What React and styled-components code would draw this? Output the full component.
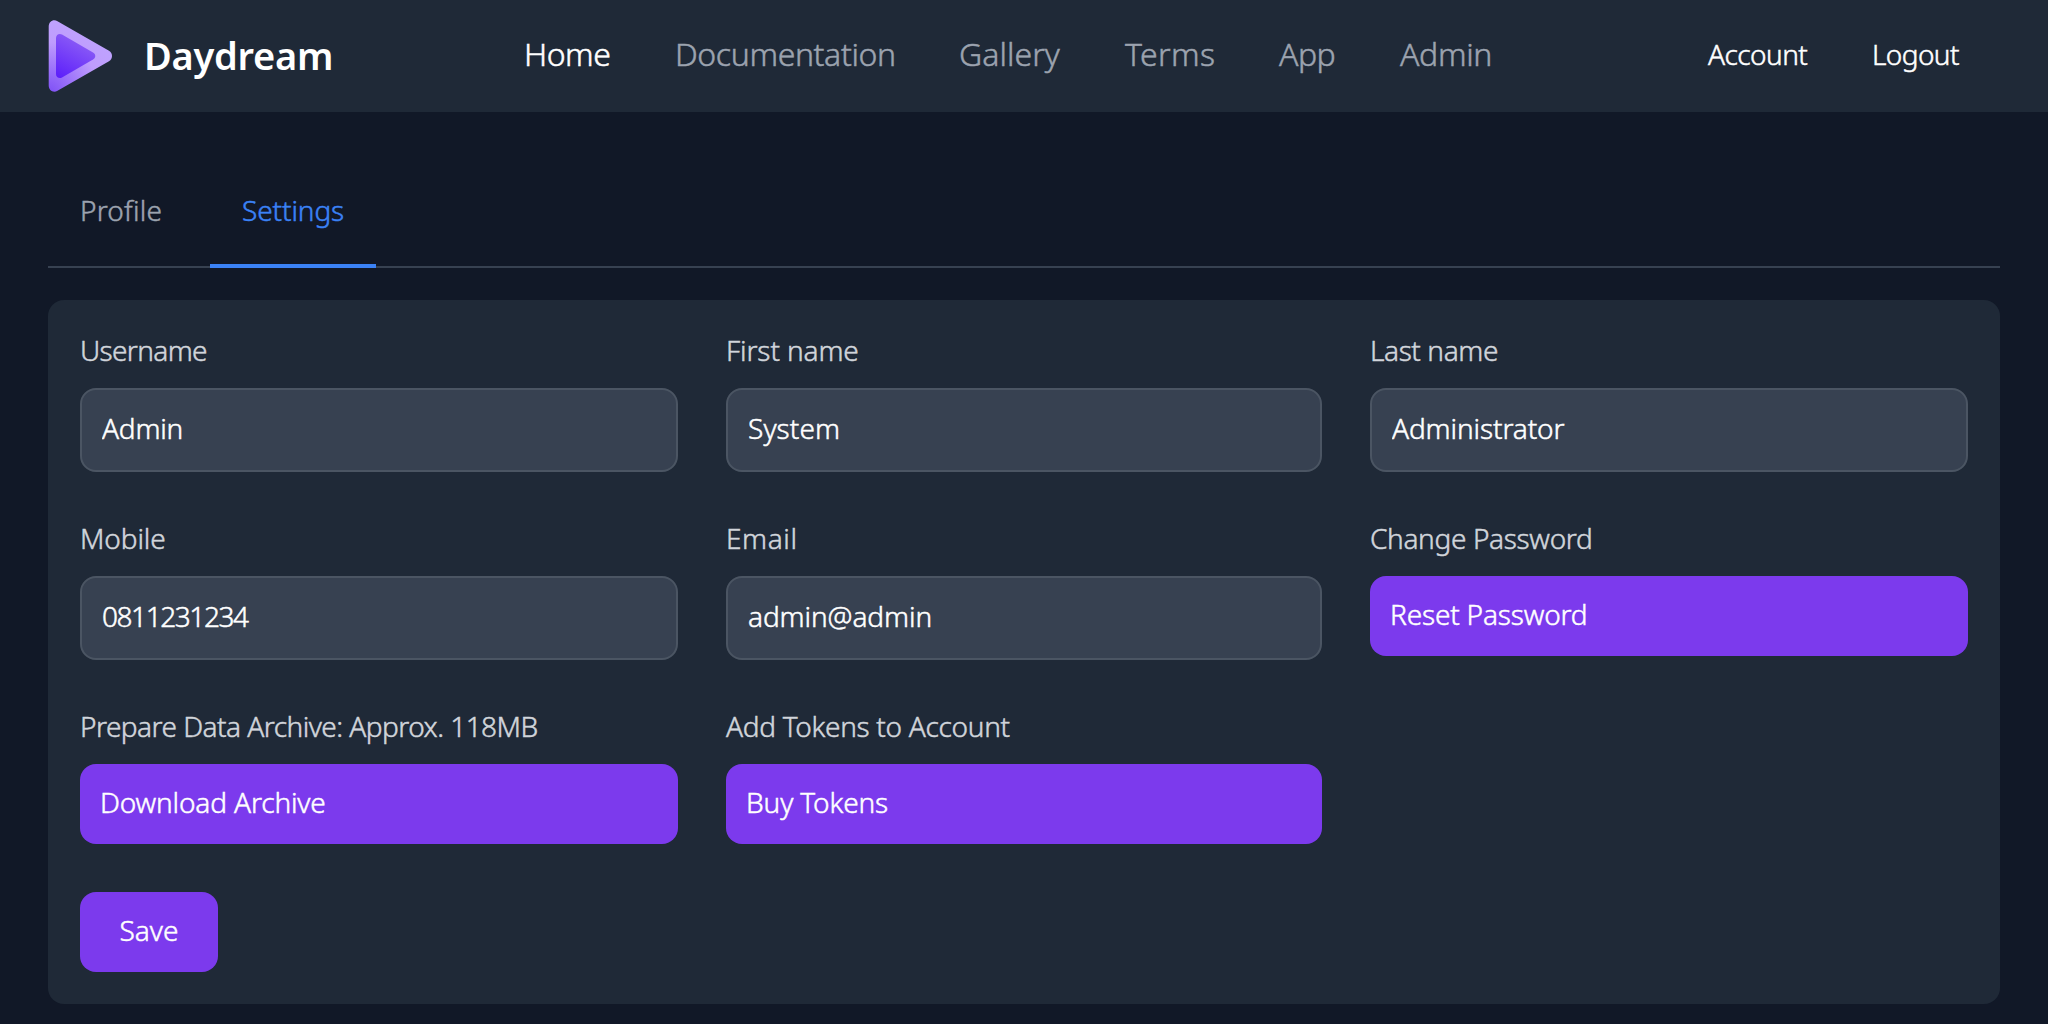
import React from 'react';
import styled, { createGlobalStyle } from 'styled-components';

const GlobalStyle = createGlobalStyle`
  *, *::before, *::after {
    box-sizing: border-box;
  }
  body {
    margin: 0;
    background: #111827;
    color: #fff;
    font-family: 'Noto Sans', 'Open Sans', sans-serif;
    font-size: 28px;
    font-weight: 300;
    -webkit-text-stroke: 0.5px currentColor;
  }
`;

const Page = styled.div`
  min-height: 1024px;
  background: #111827;
`;

const Header = styled.header`
  display: flex;
  align-items: center;
  height: 112px;
  padding: 0 86px 0 48px;
  background: #1f2937;
`;

const Brand = styled.a`
  display: flex;
  align-items: center;
  width: 476px;
  gap: 32px;
`;

const Logo = styled.svg`
  display: block;
  width: 64px;
  height: 72px;
`;

const BrandName = styled.span`
  padding-bottom: 3px;
  font-size: 38px;
  font-weight: 600;
  line-height: 56px;
  letter-spacing: -0.26px;
  -webkit-text-stroke: 0;
`;

const Nav = styled.nav`
  display: flex;
  flex: 1;
  gap: 64px;
  padding-bottom: 4px;
`;

const NavLink = styled.a`
  width: ${(p) => p.$width}px;
  color: ${(p) => (p.$active ? '#fff' : '#9ca3af')};
  font-size: 32px;
  line-height: 48px;
  letter-spacing: ${(p) => p.$track}px;
  white-space: nowrap;
`;

const UserMenu = styled.div`
  display: flex;
  gap: 64px;
  padding-bottom: 5px;
`;

const UserLink = styled.a`
  width: ${(p) => p.$width}px;
  line-height: 40px;
  letter-spacing: ${(p) => p.$track}px;
  white-space: nowrap;
`;

const Main = styled.main`
  padding: 48px 48px 20px;
`;

const Tabs = styled.div`
  display: flex;
  gap: 16px;
  height: 108px;
  border-bottom: 2px solid #374151;
`;

const Tab = styled.a`
  width: ${(p) => p.$width}px;
  height: 108px;
  padding: 30px 32px 0;
  border-bottom: 4px solid ${(p) => (p.$active ? '#3b82f6' : 'transparent')};
  color: ${(p) => (p.$active ? '#3b82f6' : '#9ca3af')};
  line-height: 40px;
  letter-spacing: ${(p) => p.$track}px;
  white-space: nowrap;
`;

const Card = styled.form`
  margin-top: 32px;
  padding: 32px;
  border-radius: 16px;
  background: #1f2937;
`;

const Fields = styled.div`
  display: grid;
  grid-template-columns: 598px 596px 598px;
  align-items: start;
  gap: 48px;
`;

const Field = styled.div`
  display: flex;
  flex-direction: column;
`;

const Label = styled.label`
  margin-bottom: 20px;
  color: #d1d5db;
  line-height: 36px;
  letter-spacing: ${(p) => p.$track}px;
  white-space: nowrap;
`;

const Input = styled.input`
  width: 100%;
  height: 84px;
  padding: 0 20px 4px;
  border: 2px solid #4b5563;
  border-radius: 16px;
  outline: none;
  background: #374151;
  color: #fff;
  font: inherit;
  letter-spacing: ${(p) => p.$track}px;
  -webkit-text-stroke: inherit;
`;

const Button = styled.button`
  height: 80px;
  padding: 0 20px 4px;
  border: 0;
  border-radius: 16px;
  background: #7c3aed;
  color: #fff;
  font: inherit;
  letter-spacing: ${(p) => p.$track || 0}px;
  text-align: left;
  -webkit-text-stroke: inherit;
`;

const SaveButton = styled(Button)`
  display: block;
  width: 138px;
  margin-top: 48px;
  text-align: center;
`;

const navItems = [
  { text: 'Home', width: 87, track: -0.5, active: true },
  { text: 'Documentation', width: 220, track: -0.38 },
  { text: 'Gallery', width: 102, track: 0.05 },
  { text: 'Terms', width: 90, track: 0.34 },
  { text: 'App', width: 57, track: -0.5 },
  { text: 'Admin', width: 93, track: -0.35 },
];

const fields = [
  { label: 'Username', track: -0.65, value: 'Admin', valueTrack: -0.2 },
  { label: 'First name', track: -0.12, value: 'System', valueTrack: 0.1 },
  { label: 'Last name', track: -0.4, value: 'Administrator', valueTrack: -0.1 },
  { label: 'Mobile', track: -0.1, value: '0811231234', valueTrack: -1.43 },
  { label: 'Email', track: 0.6, value: 'admin@admin', valueTrack: -0.08 },
  { label: 'Change Password', track: -0.34, action: 'Reset Password', valueTrack: -0.17 },
  {
    label: 'Prepare Data Archive: Approx. 118MB',
    track: -0.53,
    action: 'Download Archive',
    valueTrack: -0.14,
  },
  { label: 'Add Tokens to Account', track: -0.3, action: 'Buy Tokens', valueTrack: -0.12 },
];

function DaydreamLogo() {
  return (
    <Logo viewBox="0 0 64 72" aria-hidden="true">
      <defs>
        <radialGradient id="outer" gradientUnits="userSpaceOnUse" cx="0" cy="74" r="84">
          <stop offset="0" stopColor="#7c4df5" />
          <stop offset="0.28" stopColor="#9a70fa" />
          <stop offset="0.62" stopColor="#bf9dfd" />
          <stop offset="1" stopColor="#bfa4ff" />
        </radialGradient>
        <linearGradient id="inner" gradientUnits="userSpaceOnUse" x1="8" y1="58" x2="30" y2="18">
          <stop offset="0" stopColor="#5b1dfa" />
          <stop offset="1" stopColor="#8b5cf6" />
        </linearGradient>
      </defs>
      <path
        d="M.7 6.5C.7 1.5 5.4-1.3 9.5 1.2L61 30.8C65 33.2 65 38.8 61 41.2L9.5 70.8C5.4 73.3.7 70.5.7 65.5Z"
        fill="url(#outer)"
      />
      <path
        d="M8 18C8 14.7 11.2 12.9 14 14.5L45 32.5C48 34.3 48 37.7 45 39.5L14 57.5C11.2 59.1 8 57.3 8 54Z"
        fill="url(#inner)"
      />
    </Logo>
  );
}

export default function App() {
  return (
    <Page>
      <GlobalStyle />
      <Header>
        <Brand>
          <DaydreamLogo />
          <BrandName>Daydream</BrandName>
        </Brand>
        <Nav>
          {navItems.map((item) => (
            <NavLink
              key={item.text}
              $width={item.width}
              $track={item.track}
              $active={item.active}
            >
              {item.text}
            </NavLink>
          ))}
        </Nav>
        <UserMenu>
          <UserLink $width={100} $track={-0.55}>Account</UserLink>
          <UserLink $width={90} $track={-0.6}>Logout</UserLink>
        </UserMenu>
      </Header>
      <Main>
        <Tabs>
          <Tab $width={146} $track={0.2}>Profile</Tab>
          <Tab $width={166} $track={-0.1} $active>Settings</Tab>
        </Tabs>
        <Card>
          <Fields>
            {fields.map((f) => (
              <Field key={f.label}>
                <Label $track={f.track}>{f.label}</Label>
                {f.action ? (
                  <Button type="button" $track={f.valueTrack}>{f.action}</Button>
                ) : (
                  <Input defaultValue={f.value} $track={f.valueTrack} />
                )}
              </Field>
            ))}
          </Fields>
          <SaveButton type="button" $track={0}>Save</SaveButton>
        </Card>
      </Main>
    </Page>
  );
}
